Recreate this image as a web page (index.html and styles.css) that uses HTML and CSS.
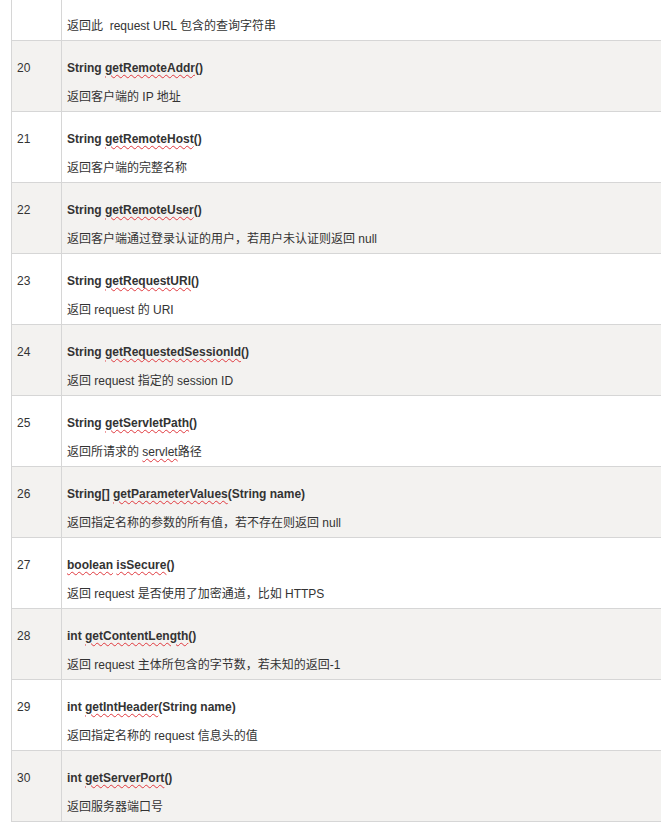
FILE: index.html
```html
<!DOCTYPE html>
<html lang="zh-CN">
<head>
    <meta charset="UTF-8">
    <meta name="viewport" content="width=device-width, initial-scale=1.0">
    <title>HttpServletRequest 方法</title>
    <link rel="stylesheet" href="styles.css">
</head>
<body>
    <table class="api-table">
        <tr class="row-cut">
            <td class="num"></td>
            <td class="info">
                <div class="desc">返回此&nbsp; request URL 包含的查询字符串</div>
            </td>
        </tr>
        <tr class="row-alt">
            <td class="num">20</td>
            <td class="info">
                <div class="sig">String <span class="typo">getRemoteAddr</span>()</div>
                <div class="desc">返回客户端的 IP 地址</div>
            </td>
        </tr>
        <tr>
            <td class="num">21</td>
            <td class="info">
                <div class="sig">String <span class="typo">getRemoteHost</span>()</div>
                <div class="desc">返回客户端的完整名称</div>
            </td>
        </tr>
        <tr class="row-alt">
            <td class="num">22</td>
            <td class="info">
                <div class="sig">String <span class="typo">getRemoteUser</span>()</div>
                <div class="desc">返回客户端通过登录认证的用户，若用户未认证则返回 null</div>
            </td>
        </tr>
        <tr>
            <td class="num">23</td>
            <td class="info">
                <div class="sig">String <span class="typo">getRequestURI</span>()</div>
                <div class="desc">返回 request 的 URI</div>
            </td>
        </tr>
        <tr class="row-alt">
            <td class="num">24</td>
            <td class="info">
                <div class="sig">String <span class="typo">getRequestedSessionId</span>()</div>
                <div class="desc">返回 request 指定的 session ID</div>
            </td>
        </tr>
        <tr>
            <td class="num">25</td>
            <td class="info">
                <div class="sig">String <span class="typo">getServletPath</span>()</div>
                <div class="desc">返回所请求的 <span class="typo">servlet</span>路径</div>
            </td>
        </tr>
        <tr class="row-alt">
            <td class="num">26</td>
            <td class="info">
                <div class="sig">String[] <span class="typo">getParameterValues</span>(String name)</div>
                <div class="desc">返回指定名称的参数的所有值，若不存在则返回 null</div>
            </td>
        </tr>
        <tr>
            <td class="num">27</td>
            <td class="info">
                <div class="sig"><span class="typo">boolean</span> <span class="typo">isSecure</span>()</div>
                <div class="desc">返回 request 是否使用了加密通道，比如 HTTPS</div>
            </td>
        </tr>
        <tr class="row-alt">
            <td class="num">28</td>
            <td class="info">
                <div class="sig">int <span class="typo">getContentLength</span>()</div>
                <div class="desc">返回 request 主体所包含的字节数，若未知的返回-1</div>
            </td>
        </tr>
        <tr>
            <td class="num">29</td>
            <td class="info">
                <div class="sig">int <span class="typo">getIntHeader</span>(String name)</div>
                <div class="desc">返回指定名称的 request 信息头的值</div>
            </td>
        </tr>
        <tr class="row-alt">
            <td class="num">30</td>
            <td class="info">
                <div class="sig">int <span class="typo">getServerPort</span>()</div>
                <div class="desc">返回服务器端口号</div>
            </td>
        </tr>
    </table>
</body>
</html>
```

FILE: styles.css
```css
body {
    margin: 0;
    padding: 0;
    background-color: #fff;
    color: #333;
    font-family: "Liberation Sans", Arial, "Noto Sans CJK SC", sans-serif;
    font-size: 12px;
}

.api-table {
    margin-left: 11px;
    width: 650px;
    border-collapse: collapse;
    border-left: 1px solid #d6d6d6;
}

.api-table tr {
    border-top: 1px solid #d6d6d6;
    border-bottom: 1px solid #d6d6d6;
}

.api-table tr.row-cut {
    border-top: none;
}

.row-alt {
    background-color: #f3f2f0;
}

.api-table td {
    vertical-align: top;
    padding: 17px 5px 4px;
    line-height: 20px;
}

.api-table .row-cut td {
    padding-top: 16px;
}

.num {
    width: 39px;
    border-right: 1px solid #d6d6d6;
}

.sig {
    font-weight: bold;
    margin-bottom: 9px;
}

.typo {
    text-decoration: underline wavy #e0393e;
    text-decoration-thickness: 1px;
    text-underline-offset: 2px;
}
```
